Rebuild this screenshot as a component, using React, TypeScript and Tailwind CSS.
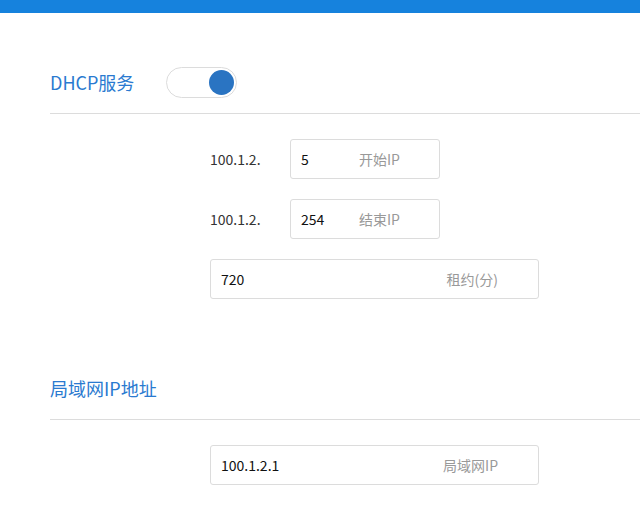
const font = { fontFamily: '"Microsoft YaHei", "Noto Sans CJK SC", "Noto Sans", sans-serif' };

function Field({ value, hint, wide }: { value: string; hint: string; wide?: boolean }) {
  return (
    <div
      className={`flex items-center h-[40px] border border-[#dcdcdc] rounded-[3px] bg-white ${wide ? 'w-[329px] pl-[10px] pr-[40px]' : 'w-[150px] pl-[10px]'}`}
    >
      <span className={`text-[14px] text-[#111] ${wide ? 'flex-1' : 'w-[58px]'}`}>{value}</span>
      <span className="text-[14px] text-[#999]">{hint}</span>
    </div>
  );
}

export default function App() {
  return (
    <div className="w-[640px] h-[506px] bg-white overflow-hidden" style={font}>
      <div className="h-[13px] bg-[#1682dd]" />

      {/* DHCP section */}
      <div className="pl-[50px] mt-[53px]">
        <div className="flex items-center h-[32px]">
          <h2 className="text-[18px] text-[#2a7ad0] w-[116px]">DHCP服务</h2>
          <div className="relative w-[71px] h-[31px] rounded-full border border-[#dcdcdc] bg-white">
            <div className="absolute right-[2px] top-[2px] w-[25px] h-[25px] rounded-full bg-[#2a74c2]" />
          </div>
        </div>
        <div className="mt-[15px] h-px bg-[#dcdcdc]" />
      </div>

      <div className="pl-[210px] mt-[25px] flex flex-col gap-[20px]">
        <div className="flex items-center">
          <span className="w-[80px] text-[14px] text-[#333]">100.1.2.</span>
          <Field value="5" hint="开始IP" />
        </div>
        <div className="flex items-center">
          <span className="w-[80px] text-[14px] text-[#333]">100.1.2.</span>
          <Field value="254" hint="结束IP" />
        </div>
        <Field value="720" hint="租约(分)" wide />
      </div>

      {/* LAN section */}
      <div className="pl-[50px] mt-[77px]">
        <h2 className="text-[18px] text-[#2a7ad0] leading-[24px]">局域网IP地址</h2>
        <div className="mt-[19px] h-px bg-[#dcdcdc]" />
      </div>

      <div className="pl-[210px] mt-[25px]">
        <Field value="100.1.2.1" hint="局域网IP" wide />
      </div>
    </div>
  );
}
